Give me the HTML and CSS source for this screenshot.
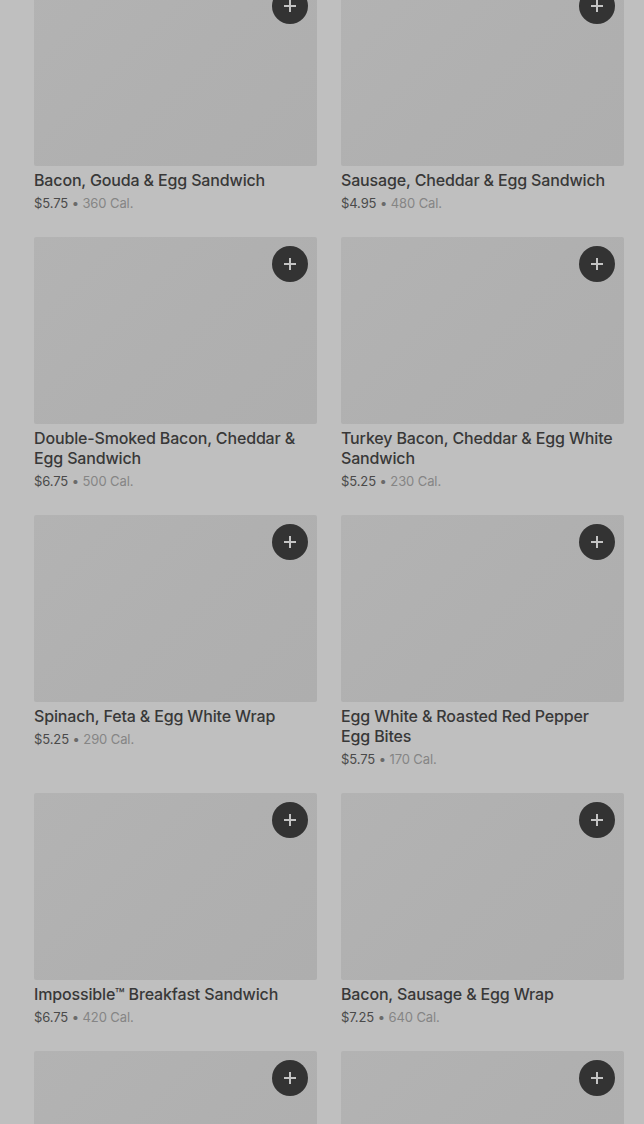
FILE: index.html
```html
<!DOCTYPE html>
<html lang="en">

<head>
    <meta charset="UTF-8">
    <meta name="viewport" content="width=device-width, initial-scale=1.0">
    <title>Breakfast Menu</title>

    <link rel="stylesheet" href="styles.css">
</head>

<body>
    <div class="menu-grid">
        <div class="item">
            <div class="item-image">
                <button class="add-button"><svg viewBox="0 0 12 12" width="12" height="12"><path d="M6 0v12M0 6h12" /></svg></button>
            </div>
            <div class="item-name">Bacon, Gouda &amp; Egg Sandwich</div>
            <div class="item-info"><span class="price">$5.75</span> <span class="dot">•</span> <span class="cal">360 Cal.</span></div>
        </div>
        <div class="item">
            <div class="item-image">
                <button class="add-button"><svg viewBox="0 0 12 12" width="12" height="12"><path d="M6 0v12M0 6h12" /></svg></button>
            </div>
            <div class="item-name">Sausage, Cheddar &amp; Egg Sandwich</div>
            <div class="item-info"><span class="price">$4.95</span> <span class="dot">•</span> <span class="cal">480 Cal.</span></div>
        </div>
        <div class="item">
            <div class="item-image">
                <button class="add-button"><svg viewBox="0 0 12 12" width="12" height="12"><path d="M6 0v12M0 6h12" /></svg></button>
            </div>
            <div class="item-name">Double-Smoked Bacon, Cheddar &amp; Egg Sandwich</div>
            <div class="item-info"><span class="price">$6.75</span> <span class="dot">•</span> <span class="cal">500 Cal.</span></div>
        </div>
        <div class="item">
            <div class="item-image">
                <button class="add-button"><svg viewBox="0 0 12 12" width="12" height="12"><path d="M6 0v12M0 6h12" /></svg></button>
            </div>
            <div class="item-name">Turkey Bacon, Cheddar &amp; Egg White Sandwich</div>
            <div class="item-info"><span class="price">$5.25</span> <span class="dot">•</span> <span class="cal">230 Cal.</span></div>
        </div>
        <div class="item">
            <div class="item-image">
                <button class="add-button"><svg viewBox="0 0 12 12" width="12" height="12"><path d="M6 0v12M0 6h12" /></svg></button>
            </div>
            <div class="item-name">Spinach, Feta &amp; Egg White Wrap</div>
            <div class="item-info"><span class="price">$5.25</span> <span class="dot">•</span> <span class="cal">290 Cal.</span></div>
        </div>
        <div class="item">
            <div class="item-image">
                <button class="add-button"><svg viewBox="0 0 12 12" width="12" height="12"><path d="M6 0v12M0 6h12" /></svg></button>
            </div>
            <div class="item-name">Egg White &amp; Roasted Red Pepper Egg Bites</div>
            <div class="item-info"><span class="price">$5.75</span> <span class="dot">•</span> <span class="cal">170 Cal.</span></div>
        </div>
        <div class="item">
            <div class="item-image">
                <button class="add-button"><svg viewBox="0 0 12 12" width="12" height="12"><path d="M6 0v12M0 6h12" /></svg></button>
            </div>
            <div class="item-name">Impossible™ Breakfast Sandwich</div>
            <div class="item-info"><span class="price">$6.75</span> <span class="dot">•</span> <span class="cal">420 Cal.</span></div>
        </div>
        <div class="item">
            <div class="item-image">
                <button class="add-button"><svg viewBox="0 0 12 12" width="12" height="12"><path d="M6 0v12M0 6h12" /></svg></button>
            </div>
            <div class="item-name">Bacon, Sausage &amp; Egg Wrap</div>
            <div class="item-info"><span class="price">$7.25</span> <span class="dot">•</span> <span class="cal">640 Cal.</span></div>
        </div>
        <div class="item">
            <div class="item-image">
                <button class="add-button"><svg viewBox="0 0 12 12" width="12" height="12"><path d="M6 0v12M0 6h12" /></svg></button>
            </div>
        </div>
        <div class="item">
            <div class="item-image">
                <button class="add-button"><svg viewBox="0 0 12 12" width="12" height="12"><path d="M6 0v12M0 6h12" /></svg></button>
            </div>
        </div>
    </div>
</body>

</html>
```

FILE: styles.css
```css
body {
    background-color: #bfbfbf;
    font-family: Inter, Roboto, Arial, sans-serif;
    margin: 0;
    padding: 0;
    height: 1124px;
    overflow: hidden;
}

/* two columns of menu cards, page is scrolled a little */
.menu-grid {
    display: grid;
    grid-template-columns: 283px 283px;
    column-gap: 24px;
    row-gap: 25px;
    padding: 0 20px 0 34px;
    margin-top: -21px;
}

.item-image {
    position: relative;
    height: 187px;
    background: linear-gradient(135deg, #b3b3b3 0%, #b0b0b0 50%, #aeaeae 100%);
    border-radius: 2px;
}

.add-button {
    position: absolute;
    top: 9px;
    right: 9px;
    width: 36px;
    height: 36px;
    border-radius: 50%;
    border: none;
    background-color: #333333;
    display: flex;
    justify-content: center;
    align-items: center;
    padding: 0;
}

.add-button svg path {
    stroke: #c4c4c4;
    stroke-width: 2;
}

.item-name {
    margin-top: 4px;
    font-size: 16px;
    line-height: 20px;
    font-weight: 500;
    letter-spacing: -0.15px;
    color: #383838;
    padding-right: 4px;
}

.item-info {
    margin-top: 4px;
    font-size: 13px;
    line-height: 18px;
    height: 18px;
    color: #4a4a4a;
    letter-spacing: -0.1px;
}

.dot {
    color: #6a6a6a;
}

.cal {
    color: #858585;
}
```
